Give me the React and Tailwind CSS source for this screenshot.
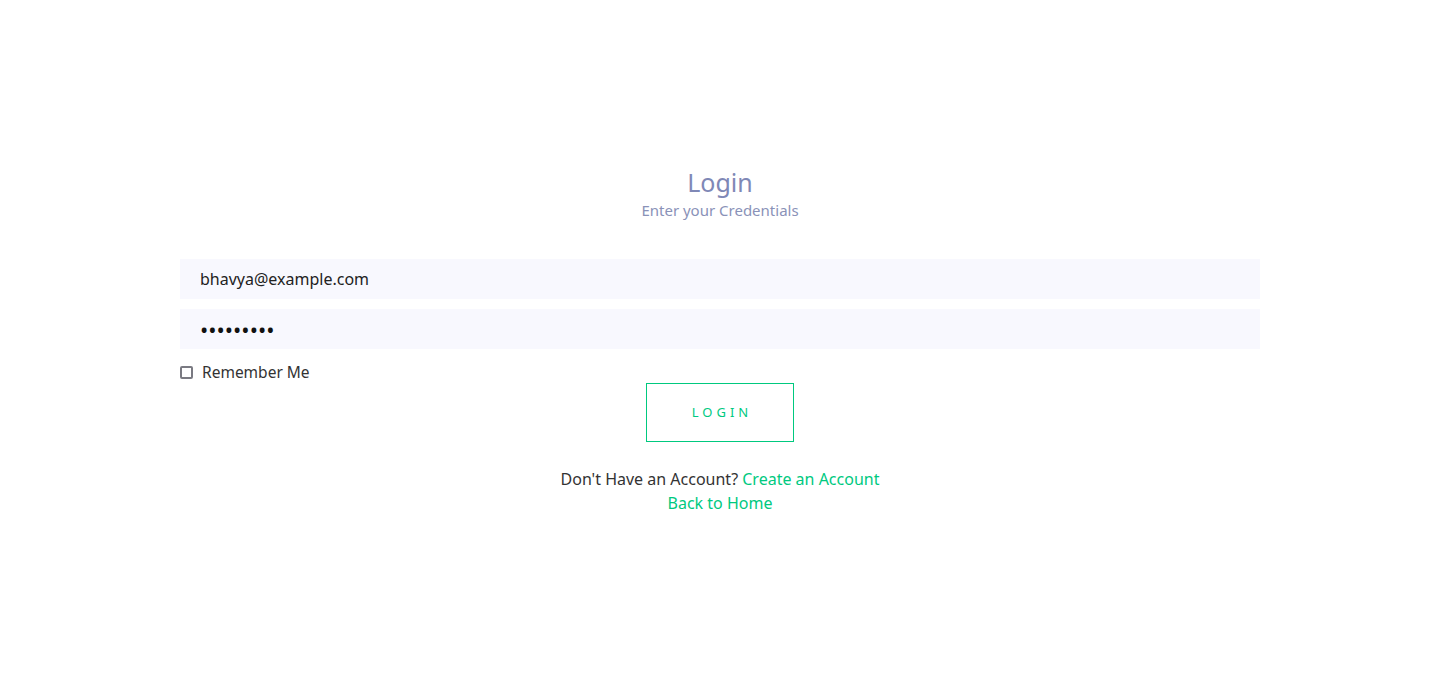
import React, { useState } from "react";

const App = () => {
  const [email, setEmail] = useState("bhavya@example.com");
  const [password, setPassword] = useState("123456789");
  const [remember, setRemember] = useState(false);

  return (
    <main className="min-h-screen bg-white font-['Noto_Sans',sans-serif] text-[#222]">
      <section className="mx-auto w-[1080px] pt-[166px]">
        <div className="text-center">
          <h1 className="text-[25px] leading-[32px] text-[#7f88b6]">Login</h1>
          <p className="mt-[1px] text-[15px] leading-[22px] text-[#8a92b8]">Enter your Credentials</p>
        </div>
        <form className="mt-[38px]" onSubmit={(e) => e.preventDefault()}>
          <input
            className="block h-[40px] w-full bg-[#f8f8fe] px-5 text-[16px] text-[#222] outline-none"
            type="email"
            value={email}
            onChange={(e) => setEmail(e.target.value)}
          />
          <input
            className="mt-[10px] block h-[40px] w-full bg-[#f8f8fe] px-5 text-[22px] text-[#111] outline-none"
            type="password"
            value={password}
            onChange={(e) => setPassword(e.target.value)}
          />
          <label className="mt-[13px] flex items-center gap-[9px] text-[15.5px] leading-[20px] text-[#333]">
            <input
              type="checkbox"
              className="h-[13px] w-[13px] appearance-none rounded-[2px] border-2 border-[#7a7a82] bg-white"
              checked={remember}
              onChange={() => setRemember(!remember)}
            />
            Remember Me
          </label>
          <div className="flex justify-center">
            <button
              type="submit"
              className="mt-[1px] h-[59px] w-[148px] border border-[#00c97f] pl-[4px] text-[13px] tracking-[4px] text-[#00c97f]"
            >
              LOGIN
            </button>
          </div>
        </form>
        <div className="mt-[25px] text-center text-[16px] leading-[24px] text-[#333]">
          <p>
            Don't Have an Account? <a className="text-[#00c97f]" href="#">Create an Account</a>
          </p>
          <a className="text-[#00c97f]" href="#">Back to Home</a>
        </div>
      </section>
    </main>
  );
};

export default App;
